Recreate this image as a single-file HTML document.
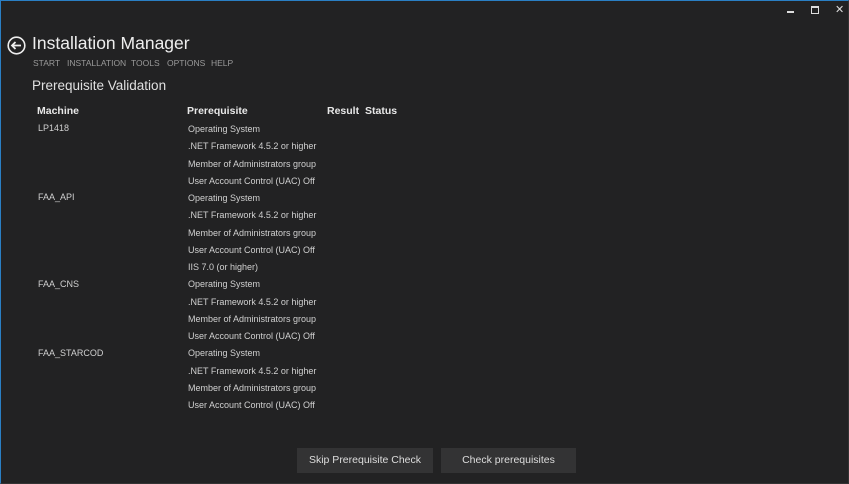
<!DOCTYPE html>
<html><head><style>
body{margin:0;width:849px;height:484px;background:#222223;overflow:hidden;font-family:"Liberation Sans",sans-serif;color:#d8d8d8;}
#f{position:absolute;left:0;top:0;width:847px;height:482px;border:1px solid #2a7fc4;border-bottom-color:#333;border-right-color:#333;}
.a{position:absolute;white-space:nowrap;}
.n{position:absolute;top:58px;font-size:8.5px;color:#9a9a9a;}
.r{position:absolute;font-size:9px;color:#d0d0d0;white-space:nowrap;}
.h{position:absolute;font-size:10.5px;font-weight:bold;color:#e8e8e8;}
.btn{position:absolute;top:448px;height:25px;background:#333334;color:#ddd;font-size:10.5px;line-height:25px;text-align:center;}
</style></head><body><div id="f"></div>
<svg class="a" style="left:7px;top:36px" width="19" height="19" viewBox="0 0 19 19"><circle cx="9.5" cy="9.5" r="8.3" fill="none" stroke="#eee" stroke-width="1.6"/><path d="M5 9.5h9M8.5 6L5 9.5 8.5 13" fill="none" stroke="#eee" stroke-width="1.8"/></svg>
<div class="a" style="left:32px;top:33px;font-size:17.5px;color:#eee">Installation Manager</div>
<div class="n" style="left:33px">START</div>
<div class="n" style="left:67px">INSTALLATION</div>
<div class="n" style="left:131px">TOOLS</div>
<div class="n" style="left:167px">OPTIONS</div>
<div class="n" style="left:211px">HELP</div>
<div class="a" style="left:32px;top:78px;font-size:13.5px;color:#e0e0e0">Prerequisite Validation</div>
<div class="h" style="left:37px;top:105px">Machine</div>
<div class="h" style="left:187px;top:105px">Prerequisite</div>
<div class="h" style="left:327px;top:105px">Result</div>
<div class="h" style="left:365px;top:105px">Status</div>
<div class="r" style="left:38px;top:123px">LP1418</div>
<div class="r" style="left:38px;top:192px">FAA_API</div>
<div class="r" style="left:38px;top:279px">FAA_CNS</div>
<div class="r" style="left:38px;top:348px">FAA_STARCOD</div>
<div class="r" style="left:188px;top:121px;line-height:17.25px">Operating System<br>.NET Framework 4.5.2 or higher<br>Member of Administrators group<br>User Account Control (UAC) Off<br>Operating System<br>.NET Framework 4.5.2 or higher<br>Member of Administrators group<br>User Account Control (UAC) Off<br>IIS 7.0 (or higher)<br>Operating System<br>.NET Framework 4.5.2 or higher<br>Member of Administrators group<br>User Account Control (UAC) Off<br>Operating System<br>.NET Framework 4.5.2 or higher<br>Member of Administrators group<br>User Account Control (UAC) Off</div>
<div class="btn" style="left:297px;width:136px">Skip Prerequisite Check</div>
<div class="btn" style="left:441px;width:135px">Check prerequisites</div>
<div class="a" style="left:787px;top:11px;width:7px;height:2px;background:#ddd"></div>
<div class="a" style="left:811px;top:6px;width:6px;height:5px;border:1px solid #ddd;border-top-width:2px"></div>
<div class="a" style="left:835px;top:3px;font-size:11px;color:#ddd">✕</div>
</body></html>
